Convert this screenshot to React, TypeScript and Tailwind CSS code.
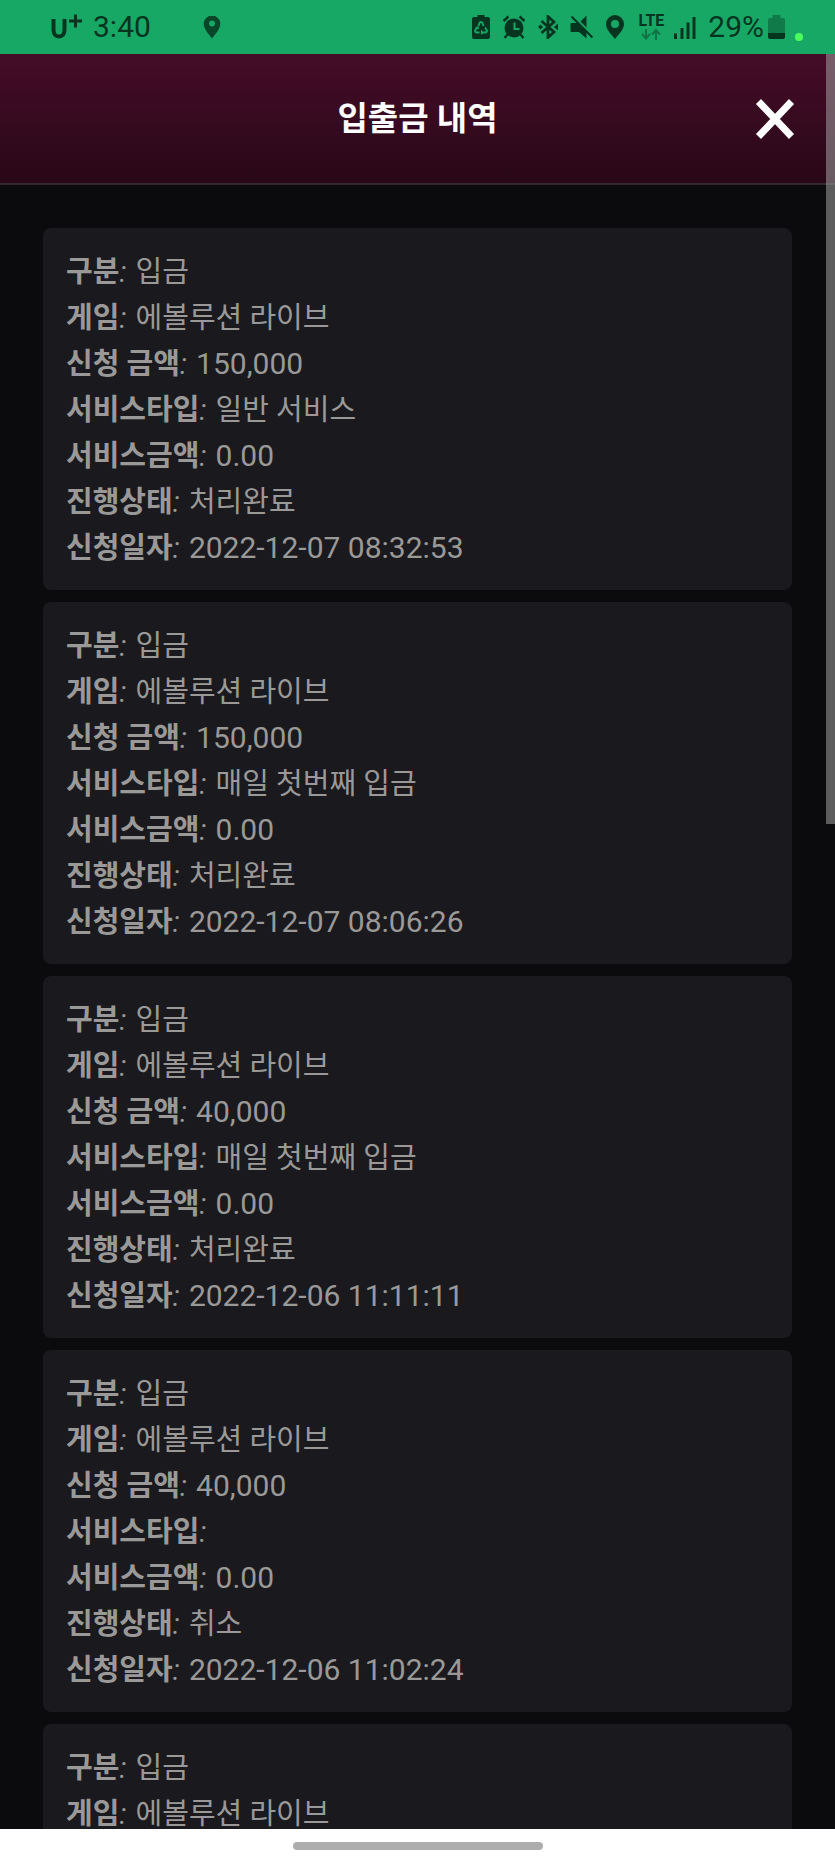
import { useState } from "react";

type Transaction = {
    type: string;
    game: string;
    amount?: string;
    serviceType?: string;
    serviceAmount?: string;
    status?: string;
    date?: string;
};

const transactions: Transaction[] = [
    {
        type: "입금",
        game: "에볼루션 라이브",
        amount: "150,000",
        serviceType: "일반 서비스",
        serviceAmount: "0.00",
        status: "처리완료",
        date: "2022-12-07 08:32:53",
    },
    {
        type: "입금",
        game: "에볼루션 라이브",
        amount: "150,000",
        serviceType: "매일 첫번째 입금",
        serviceAmount: "0.00",
        status: "처리완료",
        date: "2022-12-07 08:06:26",
    },
    {
        type: "입금",
        game: "에볼루션 라이브",
        amount: "40,000",
        serviceType: "매일 첫번째 입금",
        serviceAmount: "0.00",
        status: "처리완료",
        date: "2022-12-06 11:11:11",
    },
    {
        type: "입금",
        game: "에볼루션 라이브",
        amount: "40,000",
        serviceType: "",
        serviceAmount: "0.00",
        status: "취소",
        date: "2022-12-06 11:02:24",
    },
    {
        type: "입금",
        game: "에볼루션 라이브",
    },
];

function Pin({ className }: { className: string }) {
    return (
        <svg viewBox="0 0 18 24" className={className} fill="currentColor">
            <path
                fillRule="evenodd"
                d="M9 0a9 9 0 0 0-9 9c0 5.500 5.500 10.500 9 15 3.500-4.500 9-9.500 9-15a9 9 0 0 0-9-9Zm0 5a4 4 0 1 1 0 8 4 4 0 0 1 0-8Z"
            />
        </svg>
    );
}

// smaller hole than Pin
function AppPin({ className }: { className: string }) {
    return (
        <svg viewBox="0 0 18 24" className={className} fill="currentColor">
            <path
                fillRule="evenodd"
                d="M9 0.500a8.300 8.300 0 0 0-8.300 8.300c0 5 5 10.500 8.300 14.700 3.300-4.200 8.300-9.700 8.300-14.700a8.300 8.300 0 0 0-8.300-8.300Zm0 5a3 3 0 1 1 0 6 3 3 0 0 1 0-6Z"
            />
        </svg>
    );
}

function StatusBar() {
    return (
        <div className="flex h-[54px] shrink-0 items-center justify-between bg-[#18a866] pl-[51px] pr-8 text-[#06351f]">
            <div className="flex items-center">
                <svg viewBox="0 0 32 26" className="h-[26px] w-8" fill="none" stroke="currentColor">
                    <path d="M2.500 5v11c0 4 2 6.500 5.500 6.500s5.500-2.500 5.500-6.500V5" strokeWidth="4" />
                    <path d="M18 7h13M24.500 0.500v13" strokeWidth="3" />
                </svg>
                <span className="ml-2.5 text-3xl">3:40</span>
                <AppPin className="ml-[52px] h-6 w-[18px] opacity-85" />
            </div>
            <div className="flex items-center">
                <svg viewBox="0 0 18 24" className="h-6 w-[18px]">
                    <path
                        fill="currentColor"
                        d="M5.500 0h7v2H16q2 0 2 2v18q0 2-2 2H2q-2 0-2-2V4q0-2 2-2h3.500Z"
                    />
                    <path
                        d="M6.500 11 7.500 8q1.500-2 3 0l1 3M13 12.500l2 3q0 2-2 2h-3M5 12.500l-2 3q0 2 2 2h2.500"
                        fill="none"
                        stroke="#18a866"
                        strokeWidth="1.800"
                    />
                    <path d="M9 14.500 11.500 17.500 9 20ZM3 12.500l3.500-1.500 0.500 3.500Z" fill="#18a866" />
                </svg>
                <svg viewBox="0 0 24 24" className="ml-3 h-6 w-6" fill="none" stroke="currentColor">
                    <circle cx="12" cy="13" r="9.500" fill="currentColor" stroke="none" />
                    <path d="M1.500 6 6.500 1.500M22.500 6l-5-4.500M5.500 19.500 2.500 23M18.500 19.500l3 3.500" strokeWidth="2.400" />
                    <path d="M12.500 7.500v6.500h5" stroke="#18a866" strokeWidth="2" />
                </svg>
                <svg viewBox="0 0 20 24" className="ml-3 h-6 w-5" fill="none" stroke="currentColor">
                    <path d="m3.500 6 12.500 11-6 5.500V1.500L16 7 3.500 18" strokeWidth="2.800" />
                    <path d="M0 12l2.500-2.500L5 12l-2.500 2.500ZM20 8.500v7L16 12Z" fill="currentColor" stroke="none" />
                </svg>
                <svg viewBox="0 0 24 24" className="ml-3 h-6 w-6" fill="currentColor">
                    <path d="M16.500 0.500v12l-6-6ZM1.500 8h6l9 9v6.500L9 17H1.500Q0.500 17 0.500 16V9q0-1 1-1Z" />
                    <path d="M1.500 1.500 22.500 22.500" stroke="currentColor" strokeWidth="2" />
                </svg>
                <Pin className="ml-3 h-6 w-[18px]" />
                <div className="ml-[15px] flex flex-col items-center">
                    <span className="text-base font-bold leading-[14px]">LTE</span>
                    <svg viewBox="0 0 20 12" className="h-3 w-5 opacity-45" fill="none" stroke="currentColor" strokeWidth="2">
                        <path d="M5 1v9M1 6l4 4.500L9 6M15 12V2M11 6.500 15 2l4 4.500" />
                    </svg>
                </div>
                <svg viewBox="0 0 22 24" className="ml-2.5 h-6 w-[22px]" fill="currentColor">
                    <path d="M0 18.500h3V24H0zM6.500 13h3v11h-3zM12.500 7.500h3V24h-3zM18.500 2h3v22h-3z" />
                </svg>
                <span className="ml-3 text-3xl">29%</span>
                <svg viewBox="0 0 17 26" className="ml-1 h-[26px] w-[17px]" fill="currentColor">
                    <path opacity="0.400" d="M4.500 1h8v3H15q2 0 2 2v13H0V6q0-2 2-2h2.500Z" />
                    <path d="M0 19h17v4q0 2-2 2H2q-2 0-2-2Z" />
                </svg>
                <span className="ml-2.5 mt-5 size-2 rounded-full bg-[#4dff5c]" />
            </div>
        </div>
    );
}

type RowProps = { label: string; value?: string; numeric?: boolean };

function Row({ label, value, numeric }: RowProps) {
    if (value === undefined) return null;

    return (
        <div>
            <dt className="inline font-bold">
                {label}
                <i className="mr-0.5 font-normal">:</i>
            </dt>{" "}
            <dd className={numeric ? "inline text-3xl leading-[46px]" : "inline"}>{value}</dd>
        </div>
    );
}

function TransactionCard({ item }: { item: Transaction }) {
    return (
        <li className="rounded-lg bg-[#1a191e] px-[23px] pb-[19px] pt-[21px]">
            <dl className="text-[29px] leading-[46px] text-[#9a9998]">
                <Row label="구분" value={item.type} />
                <Row label="게임" value={item.game} />
                <Row label="신청 금액" value={item.amount} numeric />
                <Row label="서비스타입" value={item.serviceType} />
                <Row label="서비스금액" value={item.serviceAmount} numeric />
                <Row label="진행상태" value={item.status} />
                <Row label="신청일자" value={item.date} numeric />
            </dl>
        </li>
    );
}

export default function App() {
    const [open, setOpen] = useState<boolean>(true);

    return (
        <div className="flex h-screen flex-col overflow-hidden bg-[#0b0b0d] font-[Roboto,'Noto_Sans_CJK_KR',sans-serif]">
            <StatusBar />
            {open && (
                <main className="relative flex min-h-0 flex-1 flex-col">
                    <header className="grid h-[131px] shrink-0 grid-cols-[1fr_auto_1fr] items-center border-b-2 border-[#312832] bg-linear-to-b from-[#450c28] to-[#290817] px-10">
                        <h1 className="col-start-2 text-[33px] font-bold text-white">입출금 내역</h1>
                        <button
                            type="button"
                            aria-label="닫기"
                            onClick={() => setOpen(false)}
                            className="justify-self-end text-white"
                        >
                            <svg viewBox="0 0 40 40" className="size-10" fill="none" stroke="currentColor" strokeWidth="7">
                                <path d="m3.500 2.500 33 35M36.500 2.500l-33 35" />
                            </svg>
                        </button>
                    </header>
                    <ul className="flex min-h-0 flex-1 flex-col gap-3 overflow-hidden px-[43px] pt-[43px] *:shrink-0">
                        {transactions.map((item, index) => (
                            <TransactionCard key={index} item={item} />
                        ))}
                    </ul>
                    <div className="absolute right-0 top-0 h-[770px] w-[9px] bg-[#a0a0a0]/55" />
                </main>
            )}
            <div className="flex h-[33px] shrink-0 items-center justify-center bg-white">
                <div className="h-2 w-[250px] rounded-full bg-[#adadad]" />
            </div>
        </div>
    );
}
